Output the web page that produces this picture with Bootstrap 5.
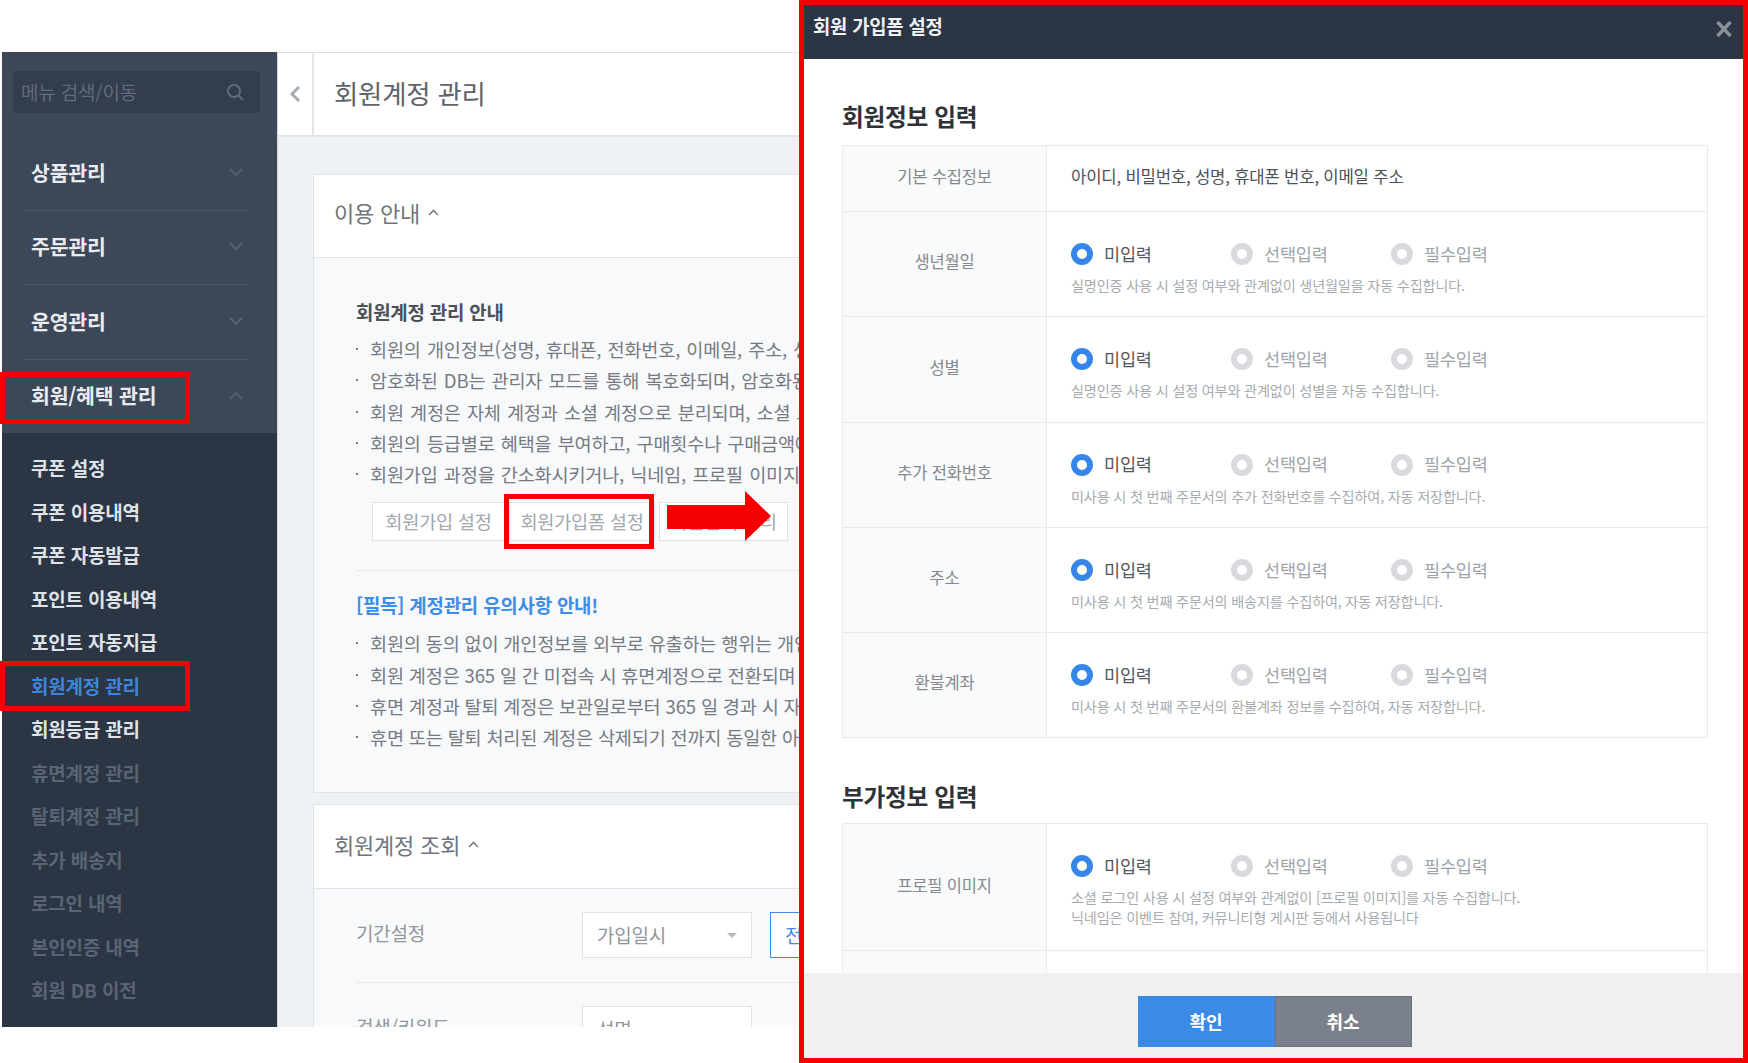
<!DOCTYPE html>
<html lang="ko">
<head>
<meta charset="utf-8">
<title>회원계정 관리</title>
<link rel="stylesheet" href="https://cdn.jsdelivr.net/npm/bootstrap@5.3.0/dist/css/bootstrap.min.css">
<style>
html,body{width:1748px;height:1063px;overflow:hidden;background:#fff;}
body{font-family:"Noto Sans CJK KR","Liberation Sans",sans-serif;color:#6f747c;letter-spacing:-.2px;}
.stage{width:1748px;height:1063px;position:relative;padding:52px 0 36px 2px;}
.shot{height:975px;overflow:hidden;}
.side{width:275px;flex:none;background:#3c4757;}
.side-top{height:84px;padding:19px 17px 0 11px;}
.side-search{height:42px;background:#333d4d;border-radius:4px;padding:0 16px 0 8px;color:#5f6a7a;font-size:19px;}
.menu-head{height:74.5px;margin:0 29px 0 22px;padding:0 5px 1px 7px;border-bottom:1px solid #4c5768;color:#e9ebee;font-size:20.5px;font-weight:700;}
.menu-head.last{border-bottom:0;height:73.5px;}
.sub-menu{background:#2b3544;padding-top:13px;height:594px;}
.sub-item{height:43.5px;line-height:43.5px;padding-left:29px;font-size:19px;font-weight:700;color:#dfe2e6;}
.sub-item.on{color:#3c86d9;}
.sub-item.dim{color:#596474;}
.main-pane{min-width:0;flex:1;background:#eff2f5;border-left:1px solid #d5d8dc;}
.top-bar{height:85px;background:#fff;border-top:1px solid #dcdfe3;border-bottom:2px solid #e0e3e7;}
.back-cell{width:36px;flex:none;border-right:2px solid #e3e5e9;}
.page-title{padding:0 0 2px 20px;font-size:26.4px;font-weight:400;color:#5e6369;margin:0;}
.box{margin-left:35px;background:#f8f9fb;border:1px solid #dfe2e6;border-right:0;}
.box-one{margin-top:37px;height:619px;}
.box-two{margin-top:11px;height:300px;}
.box-head{background:#fff;border-bottom:1px solid #e0e3e7;padding-left:20px;font-size:22px;color:#6f747c;margin:0;font-weight:400;}
.head-one{height:83px;padding-bottom:7px;}
.head-two{height:84px;padding-bottom:4px;}
.box-body{padding:39px 0 0 42px;white-space:nowrap;}
.guide-title{font-size:18.9px;font-weight:700;line-height:30px;color:#4c5157;margin:0 0 6px;}
.guide-link{color:#3d8ce8;margin:19px 0 7.500px;}
.guide-list{list-style:none;margin:0;padding:0;font-size:18.6px;line-height:31.3px;color:#767b83;}
.list-wide{word-spacing:1.2px;}
.guide-list li{padding-left:14px;position:relative;}
.guide-list li::before{content:"";position:absolute;left:0;top:15px;width:2px;height:2px;background:#777;}
.tool-row{margin:12.500px 0 29px 16px;}
.tool-btn{height:39px;padding:0;border:1px solid #dfe2e6;border-radius:0;background:#fff;color:#a3a7ae;font-size:18.7px;letter-spacing:-.3px;white-space:nowrap;}
.tool-btn.wa{width:133px;}
.tool-btn.wb{width:146px;}
.tool-btn.wc{width:129px;}
.thin-rule{height:1px;background:#e6e8ec;margin:0;opacity:1;border:0;}
.form-line{padding:23px 0 24px 42px;}
.form-label-x{width:226px;flex:none;font-size:19px;color:#91969d;margin-top:-4px;}
.fake-select{width:170px;height:46px;flex:none;background:#fff;border:1px solid #dfe2e6;padding:0 14px;font-size:19px;color:#92969d;}
.fake-caret{width:0;height:0;border-left:5px solid transparent;border-right:5px solid transparent;border-top:5px solid #b5b8bd;}
.blue-tab{width:70px;height:46px;margin-left:18px;flex:none;background:#fff;border:1.5px solid #3d8ce8;border-radius:0;color:#3d8ce8;font-size:19px;padding:0 0 0 14px;text-align:left;}
.rule-in{margin-left:42px;}
.mark-box{position:absolute;border:5px solid #f50000;pointer-events:none;}
.mark-a{left:0;top:372px;width:190px;height:52px;}
.mark-b{left:0;top:661px;width:190px;height:50px;}
.mark-c{left:504px;top:494px;width:150px;height:55px;}
.arrow-mark{position:absolute;left:667px;top:491px;}
.dialog{position:absolute;left:799px;top:0;right:0;bottom:0;border:5px solid #f50000;background:#fff;overflow:hidden;}
.dialog-top{height:54px;flex:none;background:#2b3544;color:#f1f2f4;padding:0 11px 12px 9px;}
.dialog-title{margin:0;font-size:18.8px;font-weight:700;}
.dialog-x{margin-top:5px;}
.dialog-main{flex:1;min-height:0;overflow:hidden;padding:42px 35px 0 38px;}
.sec-title{margin:0 0 14px;font-size:23.7px;line-height:30px;font-weight:700;color:#2f3338;letter-spacing:-.3px;}
.sec-two{margin:43px 0 12px;}
.grid-box{border:1px solid #e8eaed;border-bottom:0;}
.grid-row{border-bottom:1px solid #e8eaed;}
.h-small{height:66px;}
.h-normal{height:105.3px;}
.h-large{height:127px;}
.cell-name{width:204px;flex:none;background:#f9fafb;border-right:1px solid #e8eaed;font-size:16.5px;color:#85898f;padding-bottom:5px;}
.cell-val{flex:1;padding-left:24px;}
.plain-text{font-size:16.7px;color:#4d5157;padding-bottom:4px;}
.opts{padding-top:30px;height:54px;}
.opt{width:160px;font-size:17.5px;color:#a0a4aa;}
.opt.sel{color:#54585e;}
.opt input.form-check-input{width:22px;height:22px;margin:0 11px 0 0;flex:none;background:#fff;background-image:none;border:6px solid #d8dadd;box-shadow:none;}
.opt input.form-check-input:checked{background:#fff;background-image:none;border-color:#3586e8;}
.help-text{margin:9px 0 0;font-size:14.2px;line-height:20px;color:#a7abb0;}
.dialog-foot{height:85px;flex:none;background:#f1f1f1;padding:23px 0 0 2px;}
.foot-btn{width:137px;height:51px;border:0;border-radius:0;font-size:18px;font-weight:700;color:#fff;padding:0;}
.foot-ok{background:#3b8ae6;}
.foot-no{background:#7b818c;border:1px solid #6b717b;}
.foot-ok:hover{background:#3b8ae6;color:#fff;}
.foot-no:hover{background:#7b818c;color:#fff;}
</style>
</head>
<body>
<div class="stage">
  <div class="shot d-flex">
    <aside class="side d-flex flex-column">
      <div class="side-top">
        <div class="side-search d-flex align-items-center justify-content-between">
          <span>메뉴 검색/이동</span>
          <svg width="18" height="18" viewBox="0 0 18 18" fill="none" stroke="#5f6a7a" stroke-width="2"><circle cx="8" cy="8" r="6"/><path d="M12.5 12.5 17 17"/></svg>
        </div>
      </div>
      <div class="menu-head d-flex align-items-center justify-content-between"><span>상품관리</span><svg width="14" height="9" viewBox="0 0 14 9" fill="none" stroke="#566172" stroke-width="2"><path d="M1 1l6 6 6-6"/></svg></div>
      <div class="menu-head d-flex align-items-center justify-content-between"><span>주문관리</span><svg width="14" height="9" viewBox="0 0 14 9" fill="none" stroke="#566172" stroke-width="2"><path d="M1 1l6 6 6-6"/></svg></div>
      <div class="menu-head d-flex align-items-center justify-content-between"><span>운영관리</span><svg width="14" height="9" viewBox="0 0 14 9" fill="none" stroke="#566172" stroke-width="2"><path d="M1 1l6 6 6-6"/></svg></div>
      <div class="menu-head last d-flex align-items-center justify-content-between"><span>회원/혜택 관리</span><svg width="14" height="9" viewBox="0 0 14 9" fill="none" stroke="#566172" stroke-width="2"><path d="M1 8l6-6 6 6"/></svg></div>
      <div class="sub-menu">
        <div class="sub-item">쿠폰 설정</div>
        <div class="sub-item">쿠폰 이용내역</div>
        <div class="sub-item">쿠폰 자동발급</div>
        <div class="sub-item">포인트 이용내역</div>
        <div class="sub-item">포인트 자동지급</div>
        <div class="sub-item on">회원계정 관리</div>
        <div class="sub-item">회원등급 관리</div>
        <div class="sub-item dim">휴면계정 관리</div>
        <div class="sub-item dim">탈퇴계정 관리</div>
        <div class="sub-item dim">추가 배송지</div>
        <div class="sub-item dim">로그인 내역</div>
        <div class="sub-item dim">본인인증 내역</div>
        <div class="sub-item dim">회원 DB 이전</div>
      </div>
    </aside>
    <main class="main-pane">
      <div class="top-bar d-flex align-items-stretch">
        <div class="back-cell d-flex align-items-center justify-content-center"><svg width="12" height="18" viewBox="0 0 12 18" fill="none" stroke="#a6abb1" stroke-width="3"><path d="M10 2 3 9l7 7"/></svg></div>
        <h1 class="page-title d-flex align-items-center">회원계정 관리</h1>
      </div>
      <section class="box box-one">
        <h2 class="box-head head-one d-flex align-items-center gap-2">이용 안내 <svg width="11" height="7" viewBox="0 0 11 7" fill="none" stroke="#7a7f87" stroke-width="1.6"><path d="M1 6l4.500-4.500L10 6"/></svg></h2>
        <div class="box-body">
          <h3 class="guide-title">회원계정 관리 안내</h3>
          <ul class="guide-list list-wide">
            <li>회원의 개인정보(성명, 휴대폰, 전화번호, 이메일, 주소, 생년월일)</li>
            <li>암호화된 DB는 관리자 모드를 통해 복호화되며, 암호화된 정보</li>
            <li>회원 계정은 자체 계정과 소셜 계정으로 분리되며, 소셜 로그인</li>
            <li>회원의 등급별로 혜택을 부여하고, 구매횟수나 구매금액에 따라</li>
            <li>회원가입 과정을 간소화시키거나, 닉네임, 프로필 이미지를</li>
          </ul>
          <div class="tool-row d-flex gap-1">
            <button type="button" class="btn tool-btn wa">회원가입 설정</button>
            <button type="button" class="btn tool-btn wb">회원가입폼 설정</button>
            <button type="button" class="btn tool-btn wc">회원탈퇴 관리</button>
          </div>
          <hr class="thin-rule">
          <h3 class="guide-title guide-link">[필독] 계정관리 유의사항 안내!</h3>
          <ul class="guide-list">
            <li>회원의 동의 없이 개인정보를 외부로 유출하는 행위는 개인정보</li>
            <li>회원 계정은 365 일 간 미접속 시 휴면계정으로 전환되며</li>
            <li>휴면 계정과 탈퇴 계정은 보관일로부터 365 일 경과 시 자동</li>
            <li>휴면 또는 탈퇴 처리된 계정은 삭제되기 전까지 동일한 아이디</li>
          </ul>
        </div>
      </section>
      <section class="box box-two">
        <h2 class="box-head head-two d-flex align-items-center gap-2">회원계정 조회 <svg width="11" height="7" viewBox="0 0 11 7" fill="none" stroke="#7a7f87" stroke-width="1.6"><path d="M1 6l4.500-4.500L10 6"/></svg></h2>
        <div class="form-line d-flex align-items-center">
          <div class="form-label-x">기간설정</div>
          <div class="fake-select d-flex align-items-center justify-content-between"><span>가입일시</span><span class="fake-caret"></span></div>
          <button type="button" class="btn blue-tab">전체</button>
        </div>
        <hr class="thin-rule rule-in">
        <div class="form-line d-flex align-items-center">
          <div class="form-label-x">검색/키워드</div>
          <div class="fake-select d-flex align-items-center justify-content-between"><span>성명</span><span class="fake-caret"></span></div>
        </div>
      </section>
    </main>
  </div>

  <div class="mark-box mark-a"></div>
  <div class="mark-box mark-b"></div>
  <div class="mark-box mark-c"></div>
  <svg class="arrow-mark" width="105" height="50" viewBox="0 0 105 50"><path d="M0 14h78V0l26 25-26 25V38H0z" fill="#f50000"/></svg>

  <div class="dialog d-flex flex-column">
    <header class="dialog-top d-flex align-items-center justify-content-between">
      <h4 class="dialog-title">회원 가입폼 설정</h4>
      <svg class="dialog-x" width="16" height="16" viewBox="0 0 16 16" fill="none" stroke="#8b9099" stroke-width="3.500"><path d="M1.500 1 14.500 15M14.500 1 1.500 15"/></svg>
    </header>
    <div class="dialog-main">
      <h5 class="sec-title">회원정보 입력</h5>
      <div class="grid-box">
        <div class="grid-row h-small d-flex">
          <div class="cell-name d-flex align-items-center justify-content-center">기본 수집정보</div>
          <div class="cell-val plain-text d-flex align-items-center">아이디, 비밀번호, 성명, 휴대폰 번호, 이메일 주소</div>
        </div>
        <div class="grid-row h-normal d-flex">
          <div class="cell-name d-flex align-items-center justify-content-center">생년월일</div>
          <div class="cell-val">
            <div class="opts d-flex align-items-center">
              <label class="opt sel d-flex align-items-center"><input class="form-check-input" type="radio" name="a1" checked>미입력</label>
              <label class="opt d-flex align-items-center"><input class="form-check-input" type="radio" name="a1">선택입력</label>
              <label class="opt d-flex align-items-center"><input class="form-check-input" type="radio" name="a1">필수입력</label>
            </div>
            <p class="help-text">실명인증 사용 시 설정 여부와 관계없이 생년월일을 자동 수집합니다.</p>
          </div>
        </div>
        <div class="grid-row h-normal d-flex">
          <div class="cell-name d-flex align-items-center justify-content-center">성별</div>
          <div class="cell-val">
            <div class="opts d-flex align-items-center">
              <label class="opt sel d-flex align-items-center"><input class="form-check-input" type="radio" name="a2" checked>미입력</label>
              <label class="opt d-flex align-items-center"><input class="form-check-input" type="radio" name="a2">선택입력</label>
              <label class="opt d-flex align-items-center"><input class="form-check-input" type="radio" name="a2">필수입력</label>
            </div>
            <p class="help-text">실명인증 사용 시 설정 여부와 관계없이 성별을 자동 수집합니다.</p>
          </div>
        </div>
        <div class="grid-row h-normal d-flex">
          <div class="cell-name d-flex align-items-center justify-content-center">추가 전화번호</div>
          <div class="cell-val">
            <div class="opts d-flex align-items-center">
              <label class="opt sel d-flex align-items-center"><input class="form-check-input" type="radio" name="a3" checked>미입력</label>
              <label class="opt d-flex align-items-center"><input class="form-check-input" type="radio" name="a3">선택입력</label>
              <label class="opt d-flex align-items-center"><input class="form-check-input" type="radio" name="a3">필수입력</label>
            </div>
            <p class="help-text">미사용 시 첫 번째 주문서의 추가 전화번호를 수집하여, 자동 저장합니다.</p>
          </div>
        </div>
        <div class="grid-row h-normal d-flex">
          <div class="cell-name d-flex align-items-center justify-content-center">주소</div>
          <div class="cell-val">
            <div class="opts d-flex align-items-center">
              <label class="opt sel d-flex align-items-center"><input class="form-check-input" type="radio" name="a4" checked>미입력</label>
              <label class="opt d-flex align-items-center"><input class="form-check-input" type="radio" name="a4">선택입력</label>
              <label class="opt d-flex align-items-center"><input class="form-check-input" type="radio" name="a4">필수입력</label>
            </div>
            <p class="help-text">미사용 시 첫 번째 주문서의 배송지를 수집하여, 자동 저장합니다.</p>
          </div>
        </div>
        <div class="grid-row h-normal d-flex">
          <div class="cell-name d-flex align-items-center justify-content-center">환불계좌</div>
          <div class="cell-val">
            <div class="opts d-flex align-items-center">
              <label class="opt sel d-flex align-items-center"><input class="form-check-input" type="radio" name="a5" checked>미입력</label>
              <label class="opt d-flex align-items-center"><input class="form-check-input" type="radio" name="a5">선택입력</label>
              <label class="opt d-flex align-items-center"><input class="form-check-input" type="radio" name="a5">필수입력</label>
            </div>
            <p class="help-text">미사용 시 첫 번째 주문서의 환불계좌 정보를 수집하여, 자동 저장합니다.</p>
          </div>
        </div>
      </div>
      <h5 class="sec-title sec-two">부가정보 입력</h5>
      <div class="grid-box">
        <div class="grid-row h-large d-flex">
          <div class="cell-name d-flex align-items-center justify-content-center">프로필 이미지</div>
          <div class="cell-val">
            <div class="opts d-flex align-items-center">
              <label class="opt sel d-flex align-items-center"><input class="form-check-input" type="radio" name="a6" checked>미입력</label>
              <label class="opt d-flex align-items-center"><input class="form-check-input" type="radio" name="a6">선택입력</label>
              <label class="opt d-flex align-items-center"><input class="form-check-input" type="radio" name="a6">필수입력</label>
            </div>
            <p class="help-text">소셜 로그인 사용 시 설정 여부와 관계없이 [프로필 이미지]를 자동 수집합니다.<br>닉네임은 이벤트 참여, 커뮤니티형 게시판 등에서 사용됩니다</p>
          </div>
        </div>
        <div class="grid-row h-normal d-flex">
          <div class="cell-name"></div>
          <div class="cell-val"></div>
        </div>
      </div>
    </div>
    <footer class="dialog-foot d-flex justify-content-center">
      <button type="button" class="btn foot-btn foot-ok">확인</button>
      <button type="button" class="btn foot-btn foot-no">취소</button>
    </footer>
  </div>
</div>
<script src="https://cdn.jsdelivr.net/npm/bootstrap@5.3.0/dist/js/bootstrap.bundle.min.js"></script>
</body>
</html>
